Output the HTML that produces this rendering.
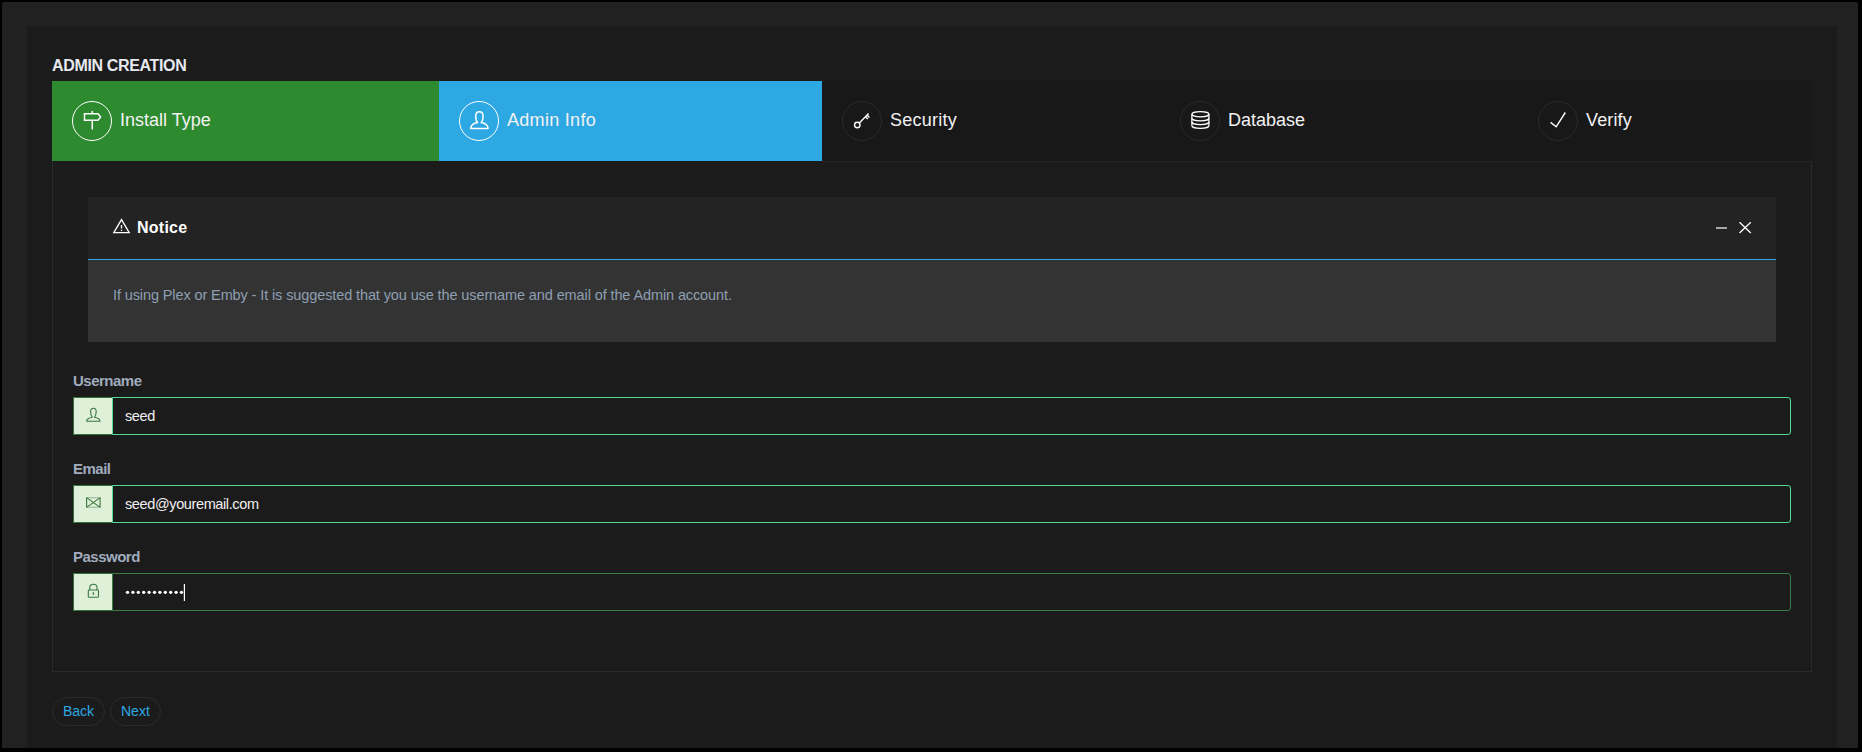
<!DOCTYPE html>
<html><head><meta charset="utf-8">
<style>
html,body{margin:0;padding:0;background:#000;width:1862px;height:752px;overflow:hidden;}
*{box-sizing:border-box;}
body{font-family:"Liberation Sans",sans-serif;position:relative;}
.a{position:absolute;}
.t{position:absolute;white-space:pre;line-height:1;}
.outer{left:2px;top:2px;width:1856px;height:746px;background:#212121;border-radius:2px 2px 0 0;}
.inner{left:27px;top:26px;width:1810px;height:722px;background:#1b1b1b;}
.title{left:52px;top:58px;font-size:16px;font-weight:bold;color:#e6e9f0;letter-spacing:-0.35px;}
.bar{left:52px;top:81px;width:1760px;height:80px;background:#181818;}
.step{top:81px;height:80px;}
.circ{top:101px;width:40px;height:40px;border-radius:50%;border:1px solid #2a2a2a;}
.stxt{top:111px;font-size:18px;color:#f2f2f2;}
.box{left:52px;top:161px;width:1760px;height:511px;border:1px solid #2a2a2a;border-top:none;}
.boxtop{left:822px;top:161px;width:990px;height:1px;background:#272727;}
.nhead{left:88px;top:197px;width:1688px;height:62px;background:#232323;}
.nline{left:88px;top:259px;width:1688px;height:1px;background:#2ea8e2;}
.nbody{left:88px;top:260px;width:1688px;height:82px;background:#333333;}
.lbl{font-size:15px;font-weight:bold;color:#a0abbd;left:73px;letter-spacing:-0.5px;}
.addon{left:73px;width:40px;height:38px;background:#dff0d8;border:1px solid #33723a;border-radius:0;}
.inp{left:112px;width:1679px;height:38px;border:1px solid #52da92;border-radius:0 3px 3px 0;background:#1b1b1b;}
.val{font-size:14.5px;color:#f0f0f0;left:125px;letter-spacing:-0.38px;}
.btn{top:697px;height:29px;border:1px solid #2b2b2b;border-radius:15px;}
.btxt{font-size:14px;color:#2ea8e2;top:704px;transform:scaleY(1.1);transform-origin:0 85%;}
svg.ov{position:absolute;left:0;top:0;}
</style></head><body>
<div class="a outer"></div>
<div class="a inner"></div>
<div class="t title">ADMIN CREATION</div>

<div class="a bar"></div>
<div class="a step" style="left:52px;width:387px;background:#2d8a2f;"></div>
<div class="a step" style="left:439px;width:383px;background:#2ea8e2;"></div>

<div class="a circ" style="left:72px;border-color:#fff;"></div>
<div class="t stxt" style="left:120px;">Install Type</div>
<div class="a circ" style="left:459px;border-color:#fff;"></div>
<div class="t stxt" style="left:507px;letter-spacing:0.3px;">Admin Info</div>
<div class="a circ" style="left:842px;"></div>
<div class="t stxt" style="left:890px;letter-spacing:0.25px;">Security</div>
<div class="a circ" style="left:1180px;"></div>
<div class="t stxt" style="left:1228px;">Database</div>
<div class="a circ" style="left:1538px;"></div>
<div class="t stxt" style="left:1586px;letter-spacing:0.15px;">Verify</div>

<div class="a box"></div>
<div class="a boxtop"></div>
<div class="a nhead"></div>
<div class="a nline"></div>
<div class="a nbody"></div>
<div class="t" style="left:137px;top:220px;font-size:16px;font-weight:bold;color:#fff;letter-spacing:0.25px;">Notice</div>
<div class="t" style="left:113px;top:288px;font-size:14.5px;color:#8e9fb2;letter-spacing:-0.11px;">If using Plex or Emby - It is suggested that you use the username and email of the Admin account.</div>

<div class="t lbl" style="top:373px;">Username</div>
<div class="a addon" style="top:397px;"></div>
<div class="a inp" style="top:397px;"></div>
<div class="t val" style="top:409px;">seed</div>

<div class="t lbl" style="top:461px;">Email</div>
<div class="a addon" style="top:485px;"></div>
<div class="a inp" style="top:485px;"></div>
<div class="t val" style="top:497px;">seed@youremail.com</div>

<div class="t lbl" style="top:549px;">Password</div>
<div class="a addon" style="top:573px;"></div>
<div class="a inp" style="top:573px;border-color:#3a7c46;"></div>

<div class="a btn" style="left:52px;width:53px;"></div>
<div class="t btxt" style="left:63px;">Back</div>
<div class="a btn" style="left:110px;width:51px;"></div>
<div class="t btxt" style="left:121px;">Next</div>

<svg class="ov" width="1862" height="752" viewBox="0 0 1862 752">
 <g fill="none" stroke="#fff" stroke-width="1.5" stroke-linejoin="miter">
  <!-- signpost -->
  <g transform="translate(72,101)">
   <path d="M12.5,12.8 H26 L28.6,16 L26,19.2 H12.5 Z"/>
   <path d="M20.3,10 V12.8 M20.3,19.2 V28.5"/>
  </g>
  <!-- person -->
  <g transform="translate(459,101)" stroke-width="1.5" stroke-linejoin="round">
   <path d="M18.6,21.6 C17.2,20.2 16.7,18.3 16.7,15.2 C16.7,12 18.2,10.8 20.4,10.8 C22.6,10.8 24.1,12 24.1,15.2 C24.1,18.3 23.6,20.2 22.2,21.6 C26.5,22.3 28.8,24.6 29.1,27.4 H11.7 C12,24.6 14.3,22.3 18.6,21.6 Z"/>
  </g>
  <!-- key -->
  <g transform="translate(842,101)" stroke-width="1.4">
   <circle cx="15.3" cy="24" r="2.75" stroke-width="1.4"/>
   <path d="M17.3,22 L26.6,12.6 M23.5,15.7 L25.8,18 M25.1,14.1 L27.4,16.4"/>
  </g>
  <!-- database -->
  <g transform="translate(1180,101)" stroke-width="1.3">
   <ellipse cx="20.4" cy="13.2" rx="8.5" ry="2.6"/>
   <path d="M11.9,13.2 V24.8 M28.9,13.2 V24.8"/>
   <path d="M11.9,17.3 A8.5,2.6 0 0 0 28.9,17.3 M11.9,21.1 A8.5,2.6 0 0 0 28.9,21.1 M11.9,24.8 A8.5,2.6 0 0 0 28.9,24.8"/>
  </g>
  <!-- check -->
  <g transform="translate(1538,101)" stroke-width="1.4">
   <path d="M12.6,21.4 L18.2,25.8 L27.3,11.5"/>
  </g>
  <!-- warning -->
  <path d="M121.5,219.6 L129.2,232.6 H113.8 Z" stroke-width="1.3"/>
  <path d="M121.5,225 V228.6 M121.5,229.8 V231" stroke-width="1.3"/>
  <!-- minus / close -->
  <path d="M1716,228 H1727" stroke-width="1.2"/>
  <path d="M1739.5,222.3 L1750.8,233 M1750.8,222.3 L1739.5,233" stroke-width="1.3"/>
 </g>
 <g fill="none" stroke="#3c763d" stroke-width="1.1" stroke-linejoin="round">
  <!-- addon person -->
  <path d="M92.3,417.2 C91,415.8 90.6,414 90.6,411.5 C90.6,409 91.8,408.2 93.4,408.2 C95,408.2 96.2,409 96.2,411.5 C96.2,414 95.8,415.8 94.5,417.2 C98,417.8 99.8,419.5 100,421.2 H86.6 C86.8,419.5 88.6,417.8 92.3,417.2 Z"/>
  <!-- envelope -->
  <path d="M86.6,497.6 V507.4 M100.1,497.6 V507.4 M86.6,497.6 L100.1,507.4 M100.1,497.6 L86.6,507.4"/>
  <path d="M86.6,497.8 H100.1 M86.6,507.2 H100.1" stroke-opacity="0.45"/>
  <!-- lock -->
  <path d="M89.8,590 V587.5 C89.8,585.3 91.3,584.3 93.4,584.3 C95.5,584.3 97,585.3 97,587.5 V590"/>
  <rect x="88.3" y="590" width="10.2" height="7.3" rx="0.8"/>
  <path d="M93.4,592.3 V594.8" stroke-width="1.3"/>
 </g>
 <!-- password dots -->
 <g fill="#fff">
  <circle cx="127.5" cy="592.3" r="1.65"/><circle cx="132.9" cy="592.3" r="1.65"/><circle cx="138.3" cy="592.3" r="1.65"/><circle cx="143.7" cy="592.3" r="1.65"/><circle cx="149.1" cy="592.3" r="1.65"/><circle cx="154.5" cy="592.3" r="1.65"/><circle cx="159.9" cy="592.3" r="1.65"/><circle cx="165.3" cy="592.3" r="1.65"/><circle cx="170.7" cy="592.3" r="1.65"/><circle cx="176.1" cy="592.3" r="1.65"/><circle cx="181.5" cy="592.3" r="1.65"/>
 </g>
 <rect x="183.8" y="584" width="1.2" height="17" fill="#fff"/>
</svg>
</body></html>
